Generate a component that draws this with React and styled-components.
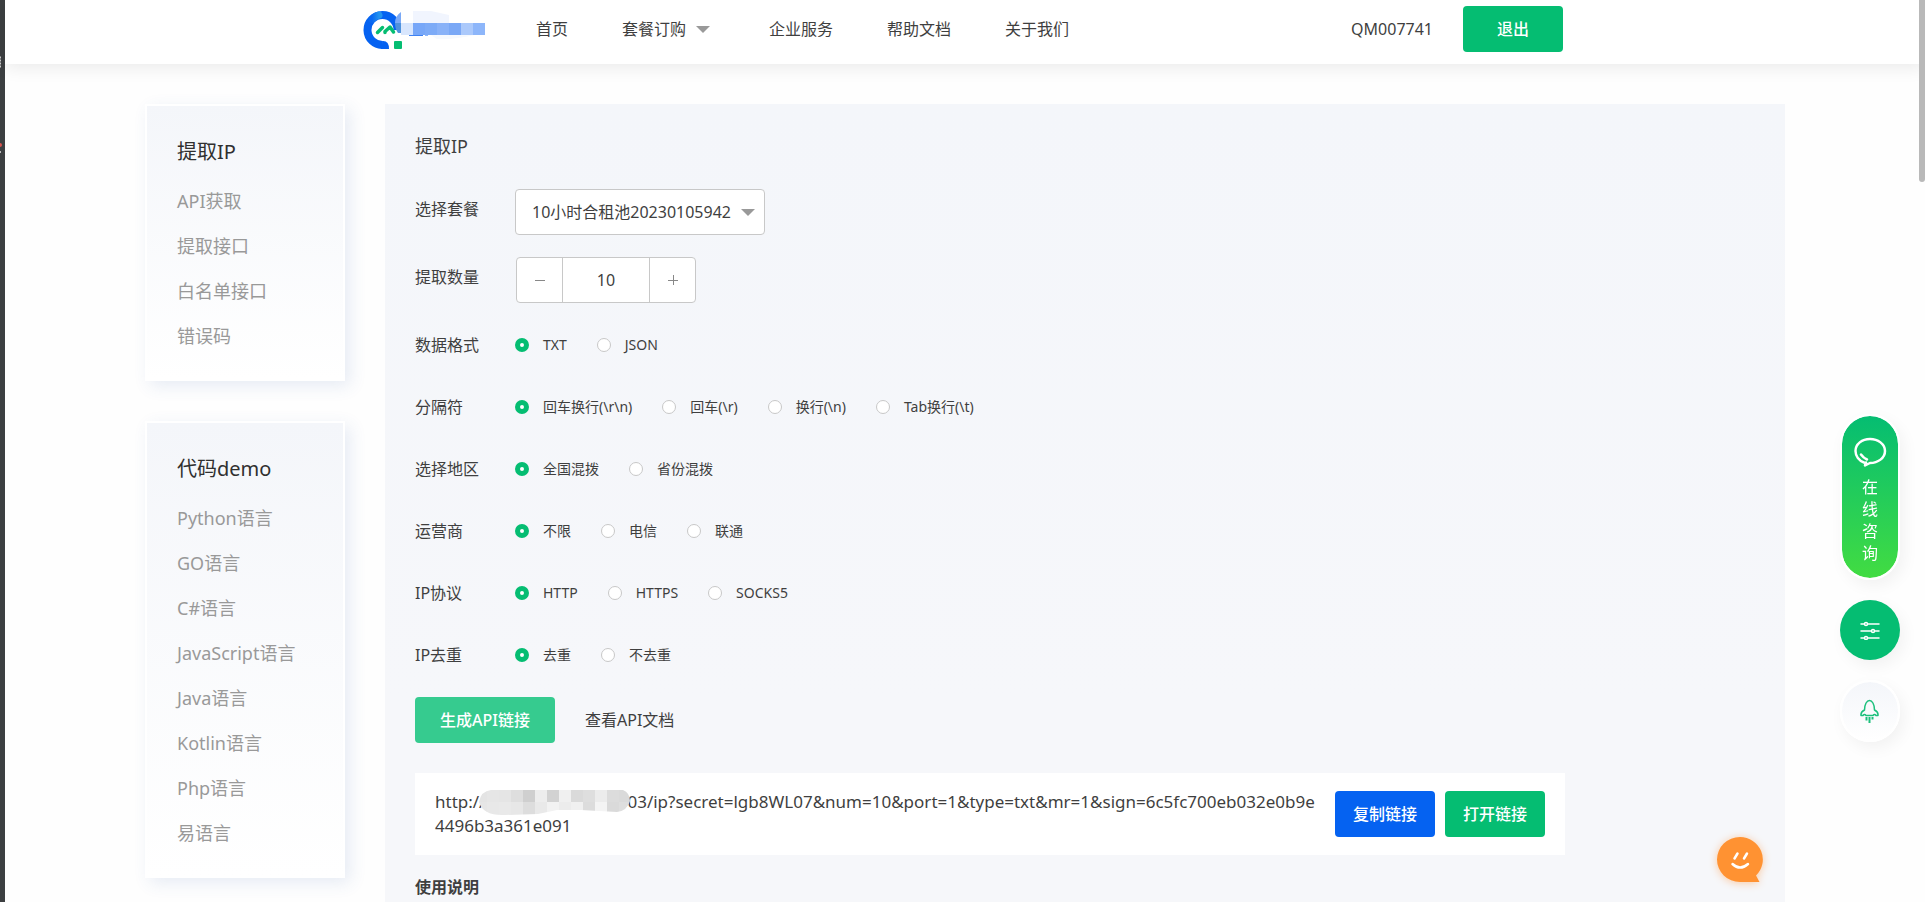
import React, { useState } from "react";
import styled, { createGlobalStyle, css } from "styled-components";

const GlobalStyle = createGlobalStyle`
  *, *::before, *::after { box-sizing: border-box; }
  body {
    margin: 0;
    background: #fefefe;
    color: #3f3f3f;
    font: 400 16px/24px "Noto Sans", "Noto Sans CJK SC", sans-serif;
  }
  button, input, select { font: inherit; color: inherit; }
  h2, h3, ul { margin: 0; padding: 0; font-weight: 400; }
  ul { list-style: none; }
  a { color: inherit; text-decoration: none; }
`;

const Shell = styled.div`
  position: relative;
  display: flex;
  height: 100vh;
  overflow: hidden;
`;

const EditorEdge = styled.div`
  flex: none;
  width: 5px;
  background: #3c3f41;
`;

const Page = styled.div`
  flex: 1;
  min-width: 0;
`;

const Header = styled.header`
  position: relative;
  height: 64px;
  padding: 0 4px 0 0;
  background: #fff;
  box-shadow: 0 4px 16px rgba(0, 0, 0, 0.08);
`;

const HeaderInner = styled.div`
  display: flex;
  align-items: center;
  max-width: 1200px;
  height: 58px;
  margin: 0 auto;
`;

const LogoLink = styled.a`
  display: flex;
  margin-right: 49px;
`;

const Nav = styled.nav`
  display: flex;
  gap: 54px;
`;

const NavLink = styled.a`
  display: flex;
  align-items: center;
  gap: 10px;
  margin-right: ${(p) => (p.$menu ? "5px" : "0")};
`;

const Caret = styled.span`
  border: 7px solid transparent;
  border-top-color: #999;
  border-bottom-width: 0;
`;

const User = styled.span`
  margin: 0 30px 0 auto;
`;

const tones = {
  green: "#05bd72",
  mint: "#36cb8f",
  blue: "#0562f1",
};

const Button = styled.button`
  flex: none;
  width: ${(p) => (p.$wide ? "140px" : "100px")};
  height: 46px;
  padding: 0;
  border: 0;
  border-radius: 4px;
  background: ${(p) => tones[p.$tone]};
  color: #fff;
  font-weight: 500;
`;

const Body = styled.div`
  display: flex;
  gap: 40px;
  max-width: 1640px;
  margin: 40px auto 0;
`;

const Sidebar = styled.aside`
  display: flex;
  flex: none;
  flex-direction: column;
  gap: 40px;
  width: 200px;
`;

const MenuCard = styled.nav`
  padding: 29px 30px 30px;
  border: 2px solid #fff;
  background: linear-gradient(#f4f6fa, #fff) padding-box;
  box-shadow: 5px 5px 16px rgba(55, 99, 170, 0.12);
`;

const MenuTitle = styled.h3`
  color: #303030;
  font-size: 20px;
  line-height: 34px;
`;

const MenuItem = styled.li`
  margin-top: 20px;
  color: #999;
  font-size: 18px;
  line-height: 25px;
  white-space: nowrap;
`;

const Panel = styled.main`
  flex: 1;
  min-width: 0;
  min-height: 1100px;
  padding: 30px;
  background: linear-gradient(#f4f6fa, #f6f7fa 600px);
`;

const PanelTitle = styled.h2`
  font-size: 18px;
  line-height: 24px;
`;

const Field = styled.div`
  display: flex;
  align-items: center;
  height: 46px;
  margin-top: 22px;
  ${(p) => p.$first && css`margin-top: 31px;`}
`;

const FieldLabel = styled.label`
  width: 100px;
  padding-bottom: 6px;
`;

const SelectWrap = styled.div`
  position: relative;
  width: 250px;
`;

const Select = styled.select`
  width: 100%;
  height: 46px;
  padding: 0 16px;
  border: 1px solid #c8c8c8;
  border-radius: 4px;
  background: #fff;
  appearance: none;
`;

const SelectCaret = styled(Caret)`
  position: absolute;
  top: 20px;
  right: 10px;
  pointer-events: none;
`;

const Stepper = styled.div`
  display: flex;
  width: 180px;
  height: 46px;
  margin-left: 1px;
  overflow: hidden;
  border: 1px solid #c8c8c8;
  border-radius: 4px;
  background: #fff;
`;

const StepButton = styled.button`
  display: flex;
  flex: none;
  align-items: center;
  justify-content: center;
  width: 45px;
  padding: 0;
  border: 0;
  background: none;
`;

const StepInput = styled.input`
  flex: 1;
  min-width: 0;
  padding: 0;
  border: solid #c8c8c8;
  border-width: 0 1px;
  text-align: center;
`;

const RadioField = styled.div`
  display: flex;
  align-items: center;
  height: 24px;
  margin-top: 38px;
  ${(p) => p.$first && css`margin-top: 30px;`}
`;

const RadioCaption = styled.span`
  width: 100px;
`;

const RadioOptions = styled.div`
  display: flex;
  gap: 30px;
`;

const RadioLabel = styled.label`
  display: flex;
  align-items: center;
  gap: 14px;
  font-size: 14px;
`;

const Radio = styled.input`
  width: 14px;
  height: 14px;
  margin: 0;
  border: 1px solid #c8c8c8;
  border-radius: 50%;
  background: #fff;
  appearance: none;
  &:checked {
    border: 5px solid #05bd72;
  }
`;

const Actions = styled.div`
  display: flex;
  align-items: center;
  gap: 30px;
  margin-top: 30px;
`;

const ResultBox = styled.div`
  display: flex;
  align-items: center;
  gap: 10px;
  max-width: 1150px;
  margin-top: 30px;
  padding: 17px 20px;
  background: #fff;
`;

const ResultUrl = styled.div`
  flex: 1;
  min-width: 0;
  margin-right: 10px;
  font-size: 17px;
`;

const Mosaic = styled.svg`
  position: relative;
  width: 142px;
  height: 26px;
  margin: -4px 0;
  overflow: visible;
  vertical-align: middle;
`;

const NoteTitle = styled.h3`
  margin-top: 20px;
  font-size: 16px;
  font-weight: 700;
`;

const FloatBar = styled.div`
  position: fixed;
  top: 414px;
  right: 25px;
  display: flex;
  flex-direction: column;
  gap: 20px;
`;

const floatKinds = {
  chat: css`
    height: 166px;
    padding-top: 6px;
    border: 2px solid #fff;
    background: linear-gradient(#05bd72, #42dc42) padding-box;
    color: #fff;
  `,
  tune: css`
    height: 60px;
    background: #05bd72;
    color: #fff;
  `,
  top: css`
    height: 62px;
    border: 2px solid #fff;
    background: linear-gradient(#f4f6fa, #fff) padding-box;
    color: #1cc07c;
  `,
};

const FloatButton = styled.button`
  display: flex;
  flex-direction: column;
  align-items: center;
  justify-content: center;
  gap: 8px;
  width: 60px;
  padding: 0;
  border: 0;
  border-radius: 31px;
  box-shadow: 4px 6px 16px rgba(0, 0, 0, 0.05);
  line-height: 22px;
  ${(p) => floatKinds[p.$kind]}
`;

const FloatText = styled.span`
  width: 16px;
`;

const Bubble = styled.button`
  position: fixed;
  right: 162px;
  bottom: 20px;
  padding: 0;
  border: 0;
  background: none;
  line-height: 0;
  filter: drop-shadow(0 1px 4px rgba(255, 145, 50, 0.45));
`;

const ScrollThumb = styled.div`
  position: absolute;
  top: 0;
  right: 0;
  width: 6px;
  height: 182px;
  border-radius: 0 0 3px 3px;
  background: #b9b9b9;
`;

const logoCells = ["#77a7f8", "#7dabf7", "#89b2f8", "#7aa8f6", "#abc9fb", "#8db6fa"];

function Logo() {
  return (
    <svg width="124" height="40" viewBox="0 0 124 40" aria-label="logo">
      <defs>
        <linearGradient id="ring" x1="0" y1="0" x2="1" y2="0">
          <stop offset="0" stopColor="#0868f2" />
          <stop offset="1" stopColor="#2394ee" />
        </linearGradient>
      </defs>
      <path d="M20 36A15 15 0 1 1 34.500 21" fill="none" stroke="#0562f1" strokeWidth="8" />
      <path d="M19.500 32Q26 31.500 26 40H19.500z" fill="#0562f1" />
      <path d="M9 10.500Q12 7 16 6" fill="none" stroke="url(#ring)" strokeWidth="7" strokeLinecap="round" />
      <path d="M14.500 23.500l5-5M22 23.500v-1l5-4.500 3.500 5" fill="none" stroke="#05bd72" strokeWidth="3.500" strokeLinecap="round" strokeLinejoin="round" />
      <rect x="31" y="32" width="8" height="8" rx="1" fill="#05bd72" />
      <path d="M38 3Q32 7 32 14H38z" fill="#7aa9f6" />
      <path d="M32 14H38V24H35Q32 20 32 14z" fill="#4e92dc" />
      <rect x="38" y="2" width="12" height="12" fill="#fff" />
      <path d="M50 2H68L86 6V14H50z" fill="#f1f5fe" />
      <path d="M68 26H112Q90 31 74 30z" fill="#f6f9fe" />
      <rect x="38" y="14" width="12" height="12" fill="#d8e6fd" />
      {logoCells.map((c, i) => (
        <rect key={i} x={50 + i * 12} y="14" width="12" height="12" fill={c} />
      ))}
      <rect x="46" y="26" width="14" height="1" fill="#3f82f3" />
      <rect x="62" y="26" width="3" height="1" fill="#8db6fa" />
    </svg>
  );
}

const maskTop = ["#e4e4e4", "#e6e6e6", "#e5e5e5", "#dedede", "#cfcfcf", "#ededed", "#d2d2d2", "#f0f0f0", "#dadada", "#dedede", "#ececec", "#dcdcdc", "#dadada"];
const maskLow = ["#e6e6e6", "#e8e8e8", "#e9e9e9", "#e7e7e7", "#dddddd", "#e9e9e9", "#f2f2f2", "#ececec", "#f0f0f0", "#dcdcdc", "#f4f4f4", "#dadada", "#dedede"];

function HostMask() {
  return (
    <Mosaic viewBox="0 0 142 26" aria-hidden="true">
      <clipPath id="mask">
        <path d="M6 0H138Q145 3 145 11Q142 21 132 22L96 20L72 20L53 24L20 25Q-2 26-6 12Q-4 1 6 0z" />
      </clipPath>
      <g clipPath="url(#mask)">
        {maskTop.map((c, i) => (
          <rect key={i} x={i * 12 - 10} y="0" width="12" height="12" fill={c} />
        ))}
        {maskLow.map((c, i) => (
          <rect key={i} x={i * 12 - 10} y="12" width="12" height="14" fill={c} />
        ))}
      </g>
    </Mosaic>
  );
}

function Glyph({ d, size = 12 }) {
  return (
    <svg width={size} height={size} viewBox="0 0 12 12" fill="none" stroke="#888" aria-hidden="true">
      <path d={d} />
    </svg>
  );
}

const navItems = ["首页", "套餐订购", "企业服务", "帮助文档", "关于我们"];

const menus = [
  { title: "提取IP", items: ["API获取", "提取接口", "白名单接口", "错误码"] },
  {
    title: "代码demo",
    items: ["Python语言", "GO语言", "C#语言", "JavaScript语言", "Java语言", "Kotlin语言", "Php语言", "易语言"],
  },
];

const radioRows = [
  { name: "format", label: "数据格式", options: ["TXT", "JSON"] },
  { name: "separator", label: "分隔符", options: ["回车换行(\\r\\n)", "回车(\\r)", "换行(\\n)", "Tab换行(\\t)"] },
  { name: "region", label: "选择地区", options: ["全国混拨", "省份混拨"] },
  { name: "carrier", label: "运营商", options: ["不限", "电信", "联通"] },
  { name: "protocol", label: "IP协议", options: ["HTTP", "HTTPS", "SOCKS5"] },
  { name: "dedupe", label: "IP去重", options: ["去重", "不去重"] },
];

export default function App() {
  const [count, setCount] = useState(10);

  return (
    <Shell>
      <GlobalStyle />
      <EditorEdge>
        <svg width="5" height="160" aria-hidden="true">
          <path d="M0 57.500h1M0 60.500h1M0 63.500h1M0 66.500h1" stroke="#ccc" strokeWidth="2" />
          <circle cx="0" cy="145" r="2" fill="#d9534f" />
          <rect x="0" y="151" width="1" height="2" fill="#bbb" />
        </svg>
      </EditorEdge>
      <Page>
        <Header>
          <HeaderInner>
            <LogoLink href="#home"><Logo /></LogoLink>
            <Nav>
              {navItems.map((item, i) => (
                <NavLink key={item} href="#nav" $menu={i === 1}>
                  {item}
                  {i === 1 && <Caret />}
                </NavLink>
              ))}
            </Nav>
            <User>QM007741</User>
            <Button type="button" $tone="green">退出</Button>
          </HeaderInner>
        </Header>
        <Body>
          <Sidebar>
            {menus.map((menu) => (
              <MenuCard key={menu.title}>
                <MenuTitle>{menu.title}</MenuTitle>
                <ul>
                  {menu.items.map((item) => (
                    <MenuItem key={item}><a href="#doc">{item}</a></MenuItem>
                  ))}
                </ul>
              </MenuCard>
            ))}
          </Sidebar>
          <Panel>
            <PanelTitle>提取IP</PanelTitle>
            <Field $first>
              <FieldLabel htmlFor="plan">选择套餐</FieldLabel>
              <SelectWrap>
                <Select id="plan">
                  <option>10小时合租池20230105942</option>
                </Select>
                <SelectCaret />
              </SelectWrap>
            </Field>
            <Field>
              <FieldLabel htmlFor="count">提取数量</FieldLabel>
              <Stepper>
                <StepButton type="button" aria-label="减少" onClick={() => setCount(Math.max(1, count - 1))}>
                  <Glyph d="M1 6.500h10" />
                </StepButton>
                <StepInput id="count" value={count} onChange={(e) => setCount(Number(e.target.value) || 1)} />
                <StepButton type="button" aria-label="增加" onClick={() => setCount(count + 1)}>
                  <Glyph d="M1 6.500h10M6.500 1v10" />
                </StepButton>
              </Stepper>
            </Field>
            {radioRows.map((row, i) => (
              <RadioField key={row.name} $first={i === 0} role="radiogroup" aria-labelledby={row.name}>
                <RadioCaption id={row.name}>{row.label}</RadioCaption>
                <RadioOptions>
                  {row.options.map((option, j) => (
                    <RadioLabel key={option}>
                      <Radio type="radio" name={row.name} defaultChecked={j === 0} />
                      {option}
                    </RadioLabel>
                  ))}
                </RadioOptions>
              </RadioField>
            ))}
            <Actions>
              <Button type="button" $tone="mint" $wide>生成API链接</Button>
              <a href="#api">查看API文档</a>
            </Actions>
            <ResultBox>
              <ResultUrl>
                http://<HostMask />03/ip?secret=lgb8WL07&amp;num=10&amp;port=1&amp;type=txt&amp;mr=1&amp;sign=6c5fc700eb032e0b9e<wbr />4496b3a361e091
              </ResultUrl>
              <Button type="button" $tone="blue">复制链接</Button>
              <Button type="button" $tone="green">打开链接</Button>
            </ResultBox>
            <NoteTitle>使用说明</NoteTitle>
          </Panel>
        </Body>
      </Page>
      <FloatBar>
        <FloatButton type="button" $kind="chat">
          <svg width="34" height="32" viewBox="0 0 34 32" fill="none" stroke="currentColor" strokeWidth="2.500" strokeLinecap="round" strokeLinejoin="round" aria-hidden="true">
            <path d="M11 26.500C6 24.500 2.500 20 2.500 15C2.500 8 9 3 17 3S32 8 32 15S25 27 17 27L12 29.500L13 26.500" />
            <path d="M8 18.500q2.500 3.500 6 5" />
          </svg>
          <FloatText>在线咨询</FloatText>
        </FloatButton>
        <FloatButton type="button" $kind="tune" aria-label="设置">
          <svg width="20" height="20" viewBox="0 0 20 20" fill="#05bd72" stroke="currentColor" strokeWidth="1.500" strokeLinecap="round" aria-hidden="true">
            <path d="M1 4h18M1 11h18M1 18h18" />
            <circle cx="6" cy="4" r="1.500" />
            <circle cx="13" cy="11" r="1.500" />
            <circle cx="6" cy="18" r="1.500" />
          </svg>
        </FloatButton>
        <FloatButton type="button" $kind="top" aria-label="返回顶部">
          <svg width="20" height="26" viewBox="0 0 20 26" fill="none" stroke="currentColor" strokeWidth="1.500" strokeLinejoin="round" aria-hidden="true">
            <path d="M4.500 12C4.500 6 7 2.500 9.500 2.500S14.500 6 14.500 12Q18.500 14 18 17.500H16Q14.500 15.500 13 17.500H6Q4.500 15.500 3 17.500H1Q.5 14 4.500 12z" />
            <path d="M6.500 19v3.500M9.500 19v6M12.500 19v2.500" strokeWidth="2" />
          </svg>
        </FloatButton>
      </FloatBar>
      <Bubble type="button" aria-label="客服">
        <svg width="46" height="45" viewBox="0 0 46 45" aria-hidden="true">
          <path d="M23 0A23 22.500 0 0 1 39 38.500L42.500 45H23A23 22.500 0 0 1 23 0z" fill="#ff9232" />
          <path d="M20.500 16.500l-3 5M30 16.500l-3 5M15.500 27q7.500 7 15.500 0" fill="none" stroke="#fff" strokeWidth="2.500" strokeLinecap="round" />
        </svg>
      </Bubble>
      <ScrollThumb />
    </Shell>
  );
}
